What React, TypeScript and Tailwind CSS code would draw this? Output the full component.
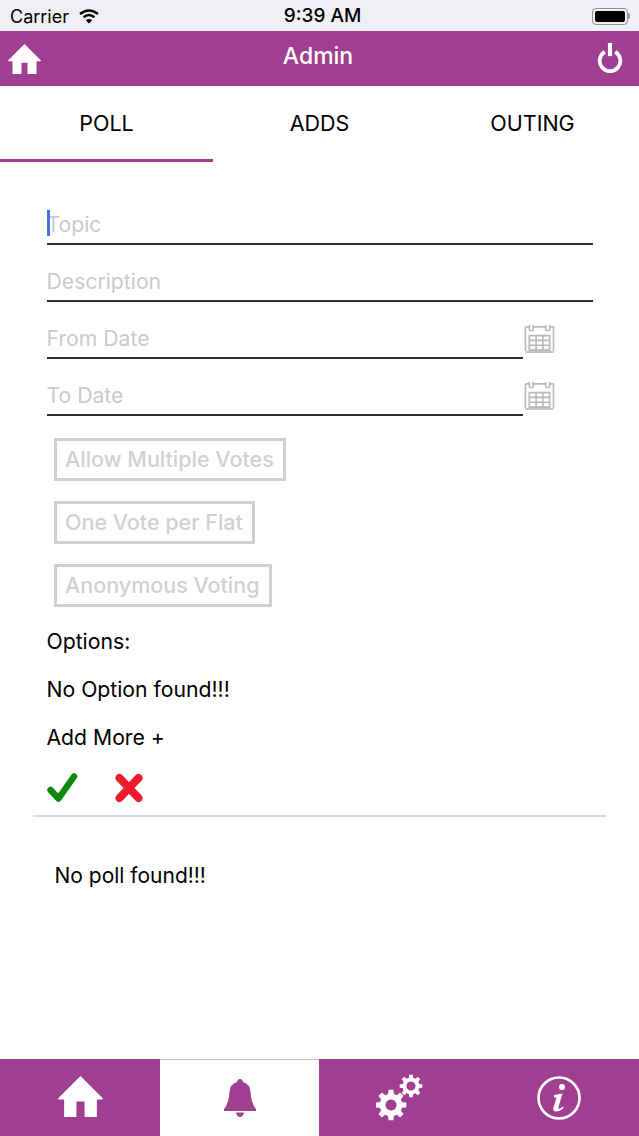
import React from 'react';

const PURPLE = 'bg-[#a03f92]';

const HomeIcon = ({ className }: { className: string }) => (
  <svg viewBox="0 0 44 40" className={className} fill="currentColor">
    <path d="M22 0 L44 22 Q44 23 43 23 L38 23 L38 40 L26 40 L26 25 L18 25 L18 40 L6 40 L6 23 L1 23 Q0 23 0 22 Z" />
  </svg>
);

const PowerIcon = () => (
  <svg viewBox="0 0 26 32" className="w-[26px] h-[30px] mb-[2px]" fill="none" stroke="white" strokeWidth="4">
    <path d="M7.5 9.5 A11 11 0 1 0 18.5 9.5" />
    <path d="M13 0 L13 14" strokeWidth="4.4" />
  </svg>
);

const WifiIcon = () => (
  <svg viewBox="0 0 20 15" className="w-[22px] h-[15px]" fill="none" stroke="black" strokeWidth="2.4">
    <path d="M1 5 Q10 -2 19 5" />
    <path d="M4.5 8.3 Q10 3.8 15.5 8.3" />
    <path d="M10 14.6 L6.8 11.2 Q10 8.8 13.2 11.2 Z" fill="black" stroke="none" />
  </svg>
);

const BatteryIcon = () => (
  <div className="flex items-center">
    <div className="w-[36px] h-[17px] rounded-[4px] border border-[#8e8e8e] p-[2px]">
      <div className="w-full h-full rounded-[2px] bg-black" />
    </div>
    <div className="w-[2px] h-[6px] bg-[#9a9a9a] rounded-r-sm" />
  </div>
);

const CalendarIcon = () => (
  <svg viewBox="0 0 32 32" className="w-[32px] h-[31px]" fill="none" stroke="#b9b9bd" strokeWidth="1.7">
    <path d="M6 3 L6 8 Q6 9 8 9 Q10 9 10 8 L10 3 M10 5 L23 5 M23 3 L23 8 Q23 9 25 9 Q27 9 27 8 L27 3" />
    <path d="M2 5 L2 30 M31 5 L31 30 M2 5 L6 5 M27 5 L31 5" />
    <path d="M6 14 H27 V29 H6 Z M6 19 H27 M6 24 H27 M13 14 V29 M20 14 V29" />
    <path d="M2 31 H31" />
  </svg>
);

const CheckIcon = () => (
  <svg viewBox="0 0 31 30" className="w-[31px] h-[30px]" fill="none" stroke="#0a8a0a" strokeWidth="6.5" strokeLinecap="round" strokeLinejoin="round">
    <path d="M3.5 17 L11.5 25.5 L27 3.5" />
  </svg>
);

const CrossIcon = () => (
  <svg viewBox="0 0 28 30" className="w-[28px] h-[30px]" fill="none" stroke="#ec1c2c" strokeWidth="8" strokeLinecap="round">
    <path d="M4.5 5 L23.5 25 M23.5 5 L4.5 25" />
  </svg>
);

const BellIcon = () => (
  <svg viewBox="0 0 32 38" className="w-[32px] h-[38px]" fill="#a03f92">
    <path d="M16 0 Q18.5 0 19 3 Q26 5 26.5 13 Q27 24 32 30 L32 32 L0 32 L0 30 Q5 24 5.5 13 Q6 5 13 3 Q13.5 0 16 0 Z" />
    <path d="M12 33.5 L20 33.5 Q19 38 16 38 Q13 38 12 33.5 Z" />
  </svg>
);

// builds a toothed wheel outline
const gearPath = (cx: number, cy: number, r: number, teeth: number) => {
  const pts: string[] = [];
  const step = (Math.PI * 2) / teeth;
  for (let i = 0; i < teeth; i++) {
    const a = i * step - Math.PI / 2;
    const p = (rad: number, off: number) =>
      `${(cx + rad * Math.cos(a + off * step)).toFixed(2)} ${(cy + rad * Math.sin(a + off * step)).toFixed(2)}`;
    pts.push(p(r * 0.74, -0.32), p(r, -0.2), p(r, 0.2), p(r * 0.74, 0.32));
  }
  return `M${pts.join(' L')} Z`;
};

const GearsIcon = () => (
  <svg viewBox="0 0 47 47" className="w-[47px] h-[47px]" fill="white">
    <path fillRule="evenodd" d={`${gearPath(15, 31, 15.5, 8)} M15 25.5 a5.5 5.5 0 1 0 0.01 0 Z`} />
    <path fillRule="evenodd" d={`${gearPath(35, 12, 11.5, 8)} M35 7.5 a4.5 4.5 0 1 0 0.01 0 Z`} />
  </svg>
);

const InfoIcon = () => (
  <svg viewBox="0 0 44 44" className="w-[44px] h-[44px] -ml-px" fill="none">
    <circle cx="22" cy="22" r="20.5" stroke="white" strokeWidth="2.6" />
    <circle cx="25" cy="11" r="3" fill="white" />
    <path d="M17 19 L25.5 17.5 L21.5 31 Q21 33.5 23 32.5 L26 30.5 L26.6 32 Q22 36 18.5 35.5 Q15.5 35 16.5 31.5 L19.5 21.5 L17 21.5 Z" fill="white" />
  </svg>
);

const Field = ({ label, short, caret }: { label: string; short?: boolean; caret?: boolean }) => (
  <div className="flex items-start h-[57px]">
    <div className="h-[57px] flex-1 border-b-2 border-[#2f2f2f] flex items-end pb-[3px] relative">
      {caret && <div className="absolute left-0 top-[22px] w-[3px] h-[26px] bg-[#4a6ee8]" />}
      <span className="text-[21.2px] leading-[32px] text-[#c9c9ce] -ml-[0.5px]">{label}</span>
    </div>
    {short && (
      <div className="w-[70px] pt-[20px]">
        <CalendarIcon />
      </div>
    )}
  </div>
);

const Toggle = ({ label }: { label: string }) => (
  <div className="flex">
    <div className="h-[43px] border-[3px] border-[#d0d0d4] pl-[9px] pr-[9.5px] flex items-center text-[21.5px] font-medium text-[#d0d0d4]">
      <span className="-ml-px">{label}</span>
    </div>
  </div>
);

export default function App() {
  return (
    <div className="w-[639px] h-[1136px] bg-white flex flex-col overflow-hidden font-['Inter',sans-serif] text-black">
      <div className="h-[31px] bg-[#efeff4] flex items-center justify-between pl-[10px] pr-[9px] pt-px relative">
        <div className="flex items-center gap-[9px] text-[18px]">
          <span>Carrier</span>
          <WifiIcon />
        </div>
        <span className="absolute left-0 right-0 text-center text-[19px] font-medium pl-[6px]">9:39 AM</span>
        <BatteryIcon />
      </div>

      <div className={`h-[55px] ${PURPLE} flex items-center justify-between pl-[8px] pr-[16px] text-white`}>
        <HomeIcon className="w-[33px] h-[30px] text-white" />
        <span className="text-[23px] font-medium pb-[4px] -ml-[2px]">Admin</span>
        <PowerIcon />
      </div>

      <div className="h-[76px] grid grid-cols-3 text-[21.5px]">
        {['POLL', 'ADDS', 'OUTING'].map((tab, i) => (
          <div key={tab} className={`flex items-center justify-center pt-px border-b-[3px] ${i === 0 ? 'border-[#a03f92]' : 'border-transparent'}`}>
            {tab}
          </div>
        ))}
      </div>

      <div className="flex-1 flex flex-col pl-[47px] pr-[46px] pt-[26px]">
        <Field label="Topic" caret />
        <Field label="Description" />
        <Field label="From Date" short />
        <Field label="To Date" short />

        <div className="flex flex-col gap-[20px] ml-[7px] mt-[22px]">
          <Toggle label="Allow Multiple Votes" />
          <Toggle label="One Vote per Flat" />
          <Toggle label="Anonymous Voting" />
        </div>

        <div className="flex flex-col gap-[16px] mt-[18px] text-[21.2px] leading-[32px] -ml-[0.5px]">
          <span>Options:</span>
          <span>No Option found!!!</span>
          <span>Add More +</span>
        </div>

        <div className="flex items-center gap-[37px] mt-[17px] h-[36px]">
          <CheckIcon />
          <CrossIcon />
        </div>

        <div className="h-[2px] bg-[#d8d8da] -ml-[14px] -mr-[13px] mt-[9px]" />

        <div className="ml-[7.5px] mt-[43px] text-[21px] leading-[32px]">No poll found!!!</div>
      </div>

      <div className={`h-[77px] ${PURPLE} grid grid-cols-[160px_159px_160px_160px]`}>
        <div className="flex items-center justify-center pb-[2px]">
          <HomeIcon className="w-[45px] h-[41px] text-white" />
        </div>
        <div className="bg-white flex items-center justify-center border-t border-[#d8b8d2]">
          <BellIcon />
        </div>
        <div className="flex items-center justify-center">
          <GearsIcon />
        </div>
        <div className="flex items-center justify-center">
          <InfoIcon />
        </div>
      </div>
    </div>
  );
}
